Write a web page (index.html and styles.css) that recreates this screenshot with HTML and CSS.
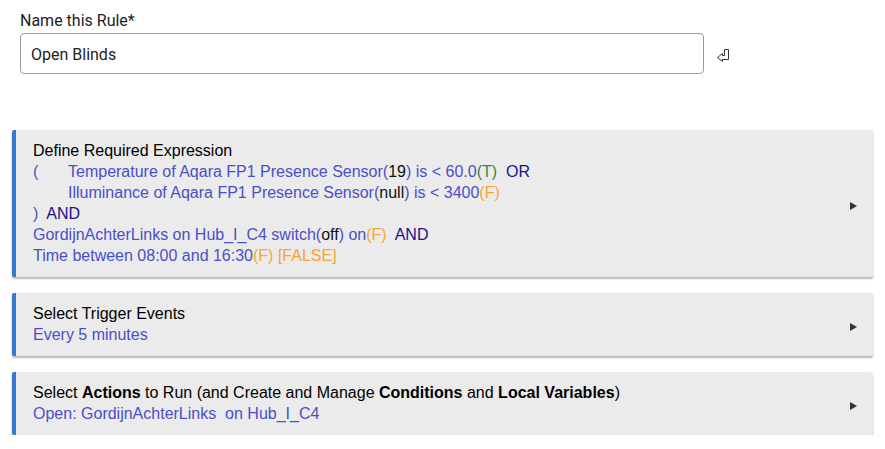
FILE: index.html
```html
<!DOCTYPE html>
<html>
<head>
<meta charset="utf-8">
<link rel="stylesheet" href="styles.css">
</head>
<body>
<div class="page">
  <div class="name-block">
    <div class="label">Name this Rule*</div>
    <div class="name-row">
      <div class="input">Open Blinds</div>
      <svg class="ret" width="12" height="13" viewBox="0 0 12 13"><path d="M7.5 0.5 H11.5 V10.5 H5.5 V12.5 L0.5 8.5 L5.5 4.5 V6.5 H7.5 Z" fill="#fff" stroke="#333" stroke-width="1"/></svg>
    </div>
  </div>

  <div class="cards">
    <div class="card">
      <div class="card-body">
        <div class="title">Define Required Expression</div>
        <div class="line blue"><span class="paren">(</span>Temperature of Aqara FP1 Presence Sensor(<span class="val">19</span>) is &lt; 60.0<span class="t">(T)</span>&nbsp; <span class="op">OR</span></div>
        <div class="line blue indent">Illuminance of Aqara FP1 Presence Sensor(<span class="val">null</span>) is &lt; 3400<span class="f">(F)</span></div>
        <div class="line blue">)&nbsp; <span class="op">AND</span></div>
        <div class="line blue">GordijnAchterLinks on Hub_I_C4 switch(<span class="val">off</span>) on<span class="f">(F)</span>&nbsp; <span class="op">AND</span></div>
        <div class="line blue">Time between 08:00 and 16:30<span class="f">(F) [FALSE]</span></div>
      </div>
      <div class="arrow"></div>
    </div>

    <div class="card">
      <div class="card-body">
        <div class="title">Select Trigger Events</div>
        <div class="line blue">Every 5 minutes</div>
      </div>
      <div class="arrow"></div>
    </div>

    <div class="card">
      <div class="card-body">
        <div class="title">Select <b>Actions</b> to Run (and Create and Manage <b>Conditions</b> and <b>Local Variables</b>)</div>
        <div class="line blue">Open: GordijnAchterLinks&nbsp; on Hub_I_C4</div>
      </div>
      <div class="arrow"></div>
    </div>
  </div>
</div>
</body>
</html>
```

FILE: styles.css
```css
html, body {
  margin: 0;
  padding: 0;
  background: #fff;
}

.page {
  padding: 11px 12px 0 12px;
  width: 861px;
}

.name-block {
  padding-left: 8px;
  font-family: Roboto, "Liberation Sans", sans-serif;
}

.label {
  font-size: 16px;
  line-height: 19px;
  color: #222;
  margin-bottom: 3px;
}

.name-row {
  display: flex;
  align-items: center;
}

.input {
  box-sizing: border-box;
  width: 684px;
  height: 41px;
  border: 1px solid #9a9a9a;
  border-radius: 4px;
  padding: 1px 10px 0 10px;
  font-size: 16px;
  line-height: 39px;
  color: #222;
}

.ret {
  margin-left: 13px;
  margin-top: 4px;
}

.cards {
  margin-top: 56px;
  display: flex;
  flex-direction: column;
  gap: 16px;
}

.card {
  display: flex;
  align-items: center;
  background: #ebebeb;
  border-left: 4px solid #3a78cf;
  border-radius: 2px;
  box-shadow: 0 2px 2px rgba(0, 0, 0, 0.28), 0 0 2px rgba(0, 0, 0, 0.06);
  font-family: "Liberation Sans", Arial, sans-serif;
  font-size: 16px;
  line-height: 21px;
}

.card-body {
  flex: 1;
  padding: 10px 17px 11px 17px;
}

.title {
  color: #000;
}

.title b {
  font-weight: bold;
}

.blue {
  color: #4a4fc9;
}

.paren {
  display: inline-block;
  width: 35px;
}

.indent {
  padding-left: 35px;
}

.val {
  color: #111;
}

.op {
  color: #20108f;
}

.t {
  color: #2f8a3a;
}

.f {
  color: #f5a536;
}

.arrow {
  width: 0;
  height: 0;
  border-top: 4px solid transparent;
  border-bottom: 4px solid transparent;
  border-left: 7px solid #333;
  margin-right: 16px;
  margin-top: 4px;
}
```
